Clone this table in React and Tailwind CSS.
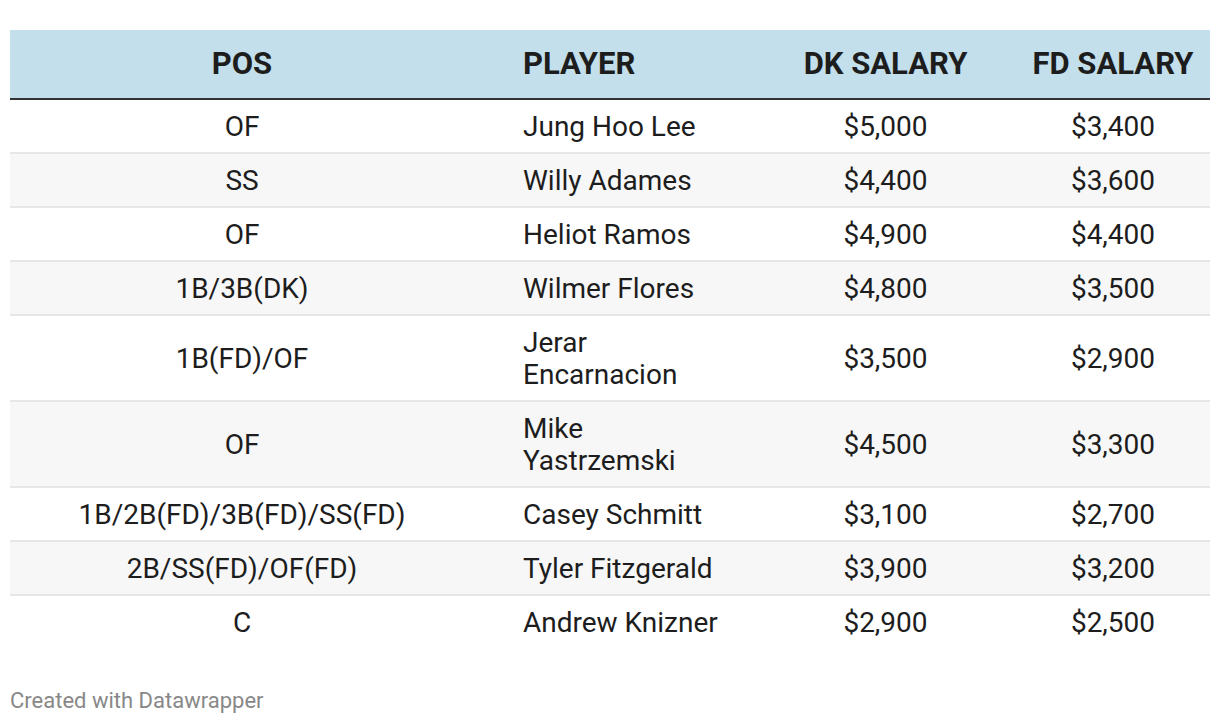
const rows = [
  { pos: "OF", player: "Jung Hoo Lee", dk: "$5,000", fd: "$3,400" },
  { pos: "SS", player: "Willy Adames", dk: "$4,400", fd: "$3,600" },
  { pos: "OF", player: "Heliot Ramos", dk: "$4,900", fd: "$4,400" },
  { pos: "1B/3B(DK)", player: "Wilmer Flores", dk: "$4,800", fd: "$3,500" },
  { pos: "1B(FD)/OF", player: "Jerar Encarnacion", dk: "$3,500", fd: "$2,900" },
  { pos: "OF", player: "Mike Yastrzemski", dk: "$4,500", fd: "$3,300" },
  { pos: "1B/2B(FD)/3B(FD)/SS(FD)", player: "Casey Schmitt", dk: "$3,100", fd: "$2,700" },
  { pos: "2B/SS(FD)/OF(FD)", player: "Tyler Fitzgerald", dk: "$3,900", fd: "$3,200" },
  { pos: "C", player: "Andrew Knizner", dk: "$2,900", fd: "$2,500" },
];

const App = () => {
  return (
    <div className="w-[1220px] h-[724px] bg-white px-[10px] pt-[30px] font-['Roboto',sans-serif] text-[#1d1d1d]">
      <div className="grid grid-cols-[464px_259px_283px_194px] bg-[#c2dfeb] border-b-2 border-[#333333] h-[70px] items-center font-bold text-[31px]">
        <div className="text-center">POS</div>
        <div className="pl-[49px]">PLAYER</div>
        <div className="text-center pl-[22px]">DK SALARY</div>
        <div className="text-center">FD SALARY</div>
      </div>
      {rows.map((r, i) => (
        <div
          key={i}
          className={`grid grid-cols-[464px_259px_283px_194px] items-center text-[28px] leading-[32px] ${
            i % 2 === 1 ? "bg-[#f7f7f7]" : "bg-white"
          } ${i < rows.length - 1 ? "border-b-2 border-[#e6e6e6]" : ""}`}
        >
          <div className="text-center pt-[11px] pb-[9px]">{r.pos}</div>
          <div className="pl-[49px] pr-[10px] pt-[11px] pb-[9px]">{r.player}</div>
          <div className="text-center pl-[22px] pt-[11px] pb-[9px]">{r.dk}</div>
          <div className="text-center pt-[11px] pb-[9px]">{r.fd}</div>
        </div>
      ))}
      <div className="mt-[36px] text-[22px] text-[#888888]">Created with Datawrapper</div>
    </div>
  );
};

export default App;
